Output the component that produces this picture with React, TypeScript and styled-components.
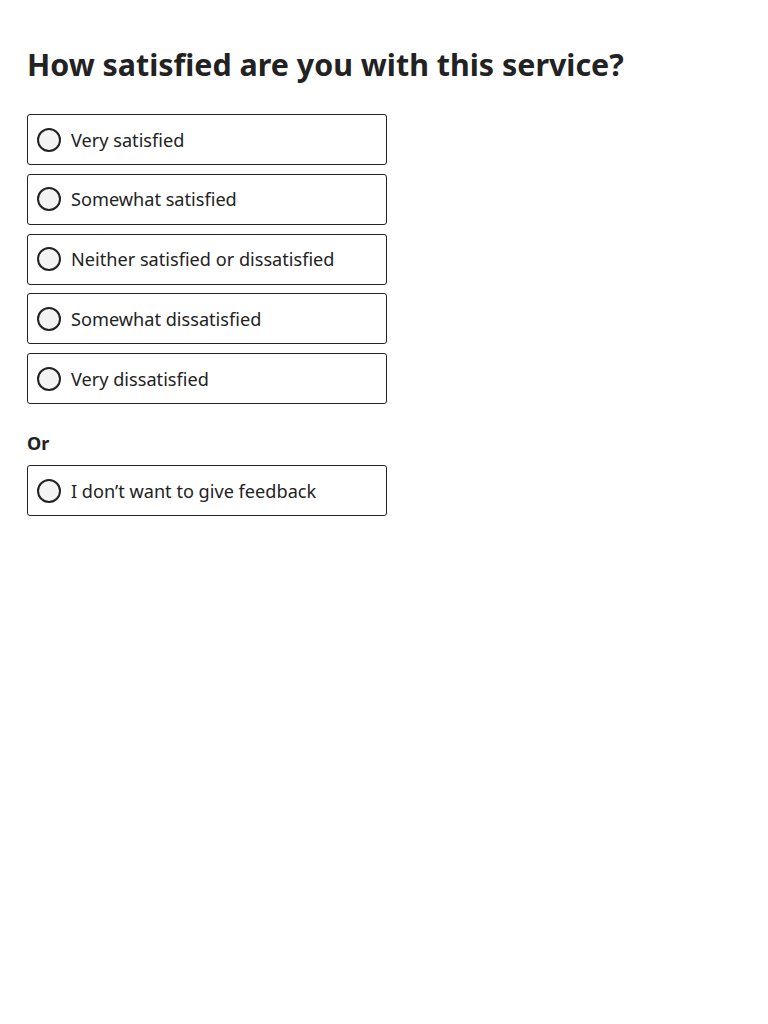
import styled, { createGlobalStyle } from 'styled-components';

const GlobalStyle = createGlobalStyle`
  body {
    margin: 0;
    background: #fff;
    font-family: "Noto Sans", "Open Sans", sans-serif;
    color: #222;
  }
`;

const Page = styled.main`
  padding: 45px 27px;
`;

const Title = styled.h1`
  margin: 0 0 29px;
  font-size: 30.4px;
  line-height: 40px;
  font-weight: 700;
  color: #222;
`;

const Options = styled.div`
  display: flex;
  flex-direction: column;
  gap: 8.75px;
  width: 360px;
`;

const Option = styled.label`
  display: flex;
  align-items: center;
  gap: 10px;
  height: 51px;
  box-sizing: border-box;
  padding: 0 9px;
  border: 1px solid #222;
  border-radius: 3px;
  font-size: 18.15px;
  cursor: pointer;
`;

const Radio = styled.span`
  width: 24px;
  height: 24px;
  box-sizing: border-box;
  flex-shrink: 0;
  border: 2px solid #222;
  border-radius: 50%;
  background: #f3f3f3;
`;

const Divider = styled.p`
  margin: 26px 0 9px;
  font-size: 18px;
  line-height: 26px;
  font-weight: 700;
`;

const answers = [
  'Very satisfied',
  'Somewhat satisfied',
  'Neither satisfied or dissatisfied',
  'Somewhat dissatisfied',
  'Very dissatisfied',
];

const App = () => (
  <>
    <GlobalStyle />
    <Page>
      <Title>How satisfied are you with this service?</Title>
      <Options>
        {answers.map((answer) => (
          <Option key={answer}>
            <Radio />
            {answer}
          </Option>
        ))}
      </Options>
      <Divider>Or</Divider>
      <Options>
        <Option>
          <Radio />
          I don’t want to give feedback
        </Option>
      </Options>
    </Page>
  </>
);

export default App;
